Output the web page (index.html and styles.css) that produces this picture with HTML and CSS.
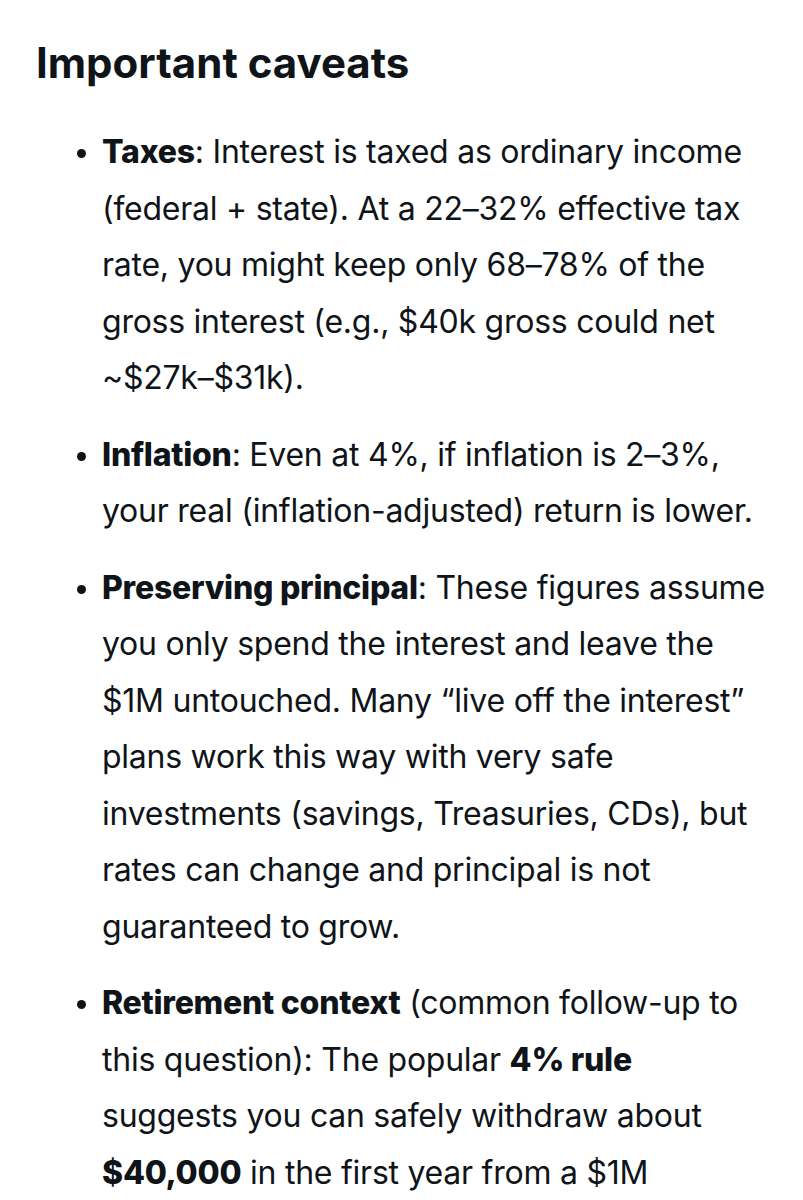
FILE: index.html
```html
<!DOCTYPE html>
<html lang="en">
<head>
<meta charset="utf-8">
<title>Important caveats</title>
<link rel="stylesheet" href="styles.css">
</head>
<body>
<main class="content">
  <h2 class="title">Important caveats</h2>
  <ul class="caveats">
    <li><strong>Taxes</strong>: Interest is taxed as ordinary income<br>(federal + state). At a 22–32% effective tax<br>rate, you might keep only 68–78% of the<br>gross interest (e.g., $40k gross could net<br>~$27k–$31k).</li>
    <li><strong>Inflation</strong>: Even at 4%, if inflation is 2–3%,<br>your real (inflation-adjusted) return is lower.</li>
    <li><strong>Preserving principal</strong>: These figures assume<br>you only spend the interest and leave the<br>$1M untouched. Many “live off the interest”<br>plans work this way with very safe<br>investments (savings, Treasuries, CDs), but<br>rates can change and principal is not<br>guaranteed to grow.</li>
    <li><strong>Retirement context</strong> (common follow-up to<br>this question): The popular <strong>4% rule</strong><br>suggests you can safely withdraw about<br><strong>$40,000</strong> in the first year from a $1M<br>portfolio.</li>
  </ul>
</main>
</body>
</html>
```

FILE: styles.css
```css
html, body {
  margin: 0;
  padding: 0;
  background: #ffffff;
}

body {
  font-family: "Inter", "Noto Sans", sans-serif;
  color: #0f1419;
}

.content {
  padding: 0 8px 0 36px;
}

.title {
  margin: 0;
  padding-top: 38px;
  font-size: 42px;
  font-weight: 700;
  line-height: 50px;
}

.caveats {
  margin: 36px 0 0;
  padding-left: 66px;
  font-size: 32px;
  letter-spacing: -0.25px;
  line-height: 56.5px;
}

.caveats li {
  margin-bottom: 20px;
  white-space: nowrap;
}

.caveats li::marker {
  font-size: 28px;
}

.caveats strong {
  font-weight: 800;
}
```
